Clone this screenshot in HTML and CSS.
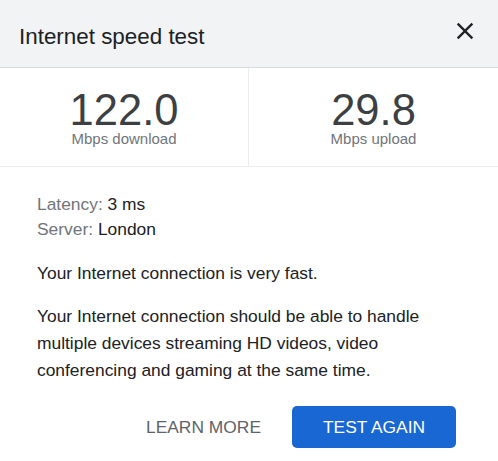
FILE: index.html
```html
<!DOCTYPE html>
<html>
<head>
<meta charset="utf-8">
<link rel="stylesheet" href="styles.css">
</head>
<body>
<div class="dialog">
  <div class="header">
    <h1 class="title">Internet speed test</h1>
    <svg class="close" width="28" height="28" viewBox="0 0 24 24" aria-label="Close"><path d="M19 6.41L17.59 5 12 10.59 6.41 5 5 6.41 10.59 12 5 17.59 6.41 19 12 13.41 17.59 19 19 17.59 13.41 12z" fill="#202124"/></svg>
  </div>
  <div class="stats">
    <div class="stat stat-left">
      <div class="value">122.0</div>
      <div class="unit">Mbps download</div>
    </div>
    <div class="stat">
      <div class="value">29.8</div>
      <div class="unit">Mbps upload</div>
    </div>
  </div>
  <div class="content">
    <div class="meta">
      <div><span class="label">Latency:</span> 3 ms</div>
      <div><span class="label">Server:</span> London</div>
    </div>
    <p class="fast">Your Internet connection is very fast.</p>
    <p class="desc">Your Internet connection should be able to handle multiple devices streaming HD videos, video conferencing and gaming at the same time.</p>
    <div class="actions">
      <span class="learn">LEARN MORE</span>
      <span class="again">TEST AGAIN</span>
    </div>
  </div>
</div>
</body>
</html>
```
FILE: styles.css
```css
* { box-sizing: border-box; margin: 0; padding: 0; }
html, body { background: #fff; }
body {
  font-family: "Liberation Sans", Arial, sans-serif;
  width: 498px;
  height: 461px;
  overflow: hidden;
  color: #202124;
}
.header {
  height: 68px;
  background: #f1f3f4;
  border-bottom: 1px solid #dadce0;
  display: flex;
  justify-content: space-between;
  align-items: flex-start;
  padding: 0 19px 0 19px;
}
.title {
  font-size: 22.4px;
  font-weight: 400;
  line-height: 26px;
  margin-top: 24px;
  color: #202124;
}
.close { margin-top: 17px; display: block; }
.stats {
  display: grid;
  grid-template-columns: 249px 1fr;
  height: 99px;
  border-bottom: 1px solid #ebedef;
}
.stat {
  display: flex;
  flex-direction: column;
  align-items: center;
  padding-top: 22px;
}
.stat-left { border-right: 1px solid #ebedef; }
.value {
  font-size: 43.5px;
  line-height: 40px;
  color: #3c4043;
}
.unit {
  font-size: 15px;
  line-height: 18px;
  color: #70757a;
}
.content {
  padding: 25px 37px 0 37px;
  font-size: 17.4px;
}
.meta { line-height: 24.5px; }
.label { color: #70757a; }
.fast { line-height: 24px; margin-top: 20px; }
.desc { line-height: 27px; margin-top: 18px; }
.actions {
  display: flex;
  justify-content: flex-end;
  align-items: center;
  margin-top: 22px;
  margin-right: 5px;
}
.learn {
  color: #5f6368;
  font-size: 17.4px;
  margin-right: 31px;
}
.again {
  width: 164px;
  height: 42px;
  background: #1967d2;
  border-radius: 5px;
  color: #fff;
  font-size: 17.4px;
  display: flex;
  align-items: center;
  justify-content: center;
}
```
